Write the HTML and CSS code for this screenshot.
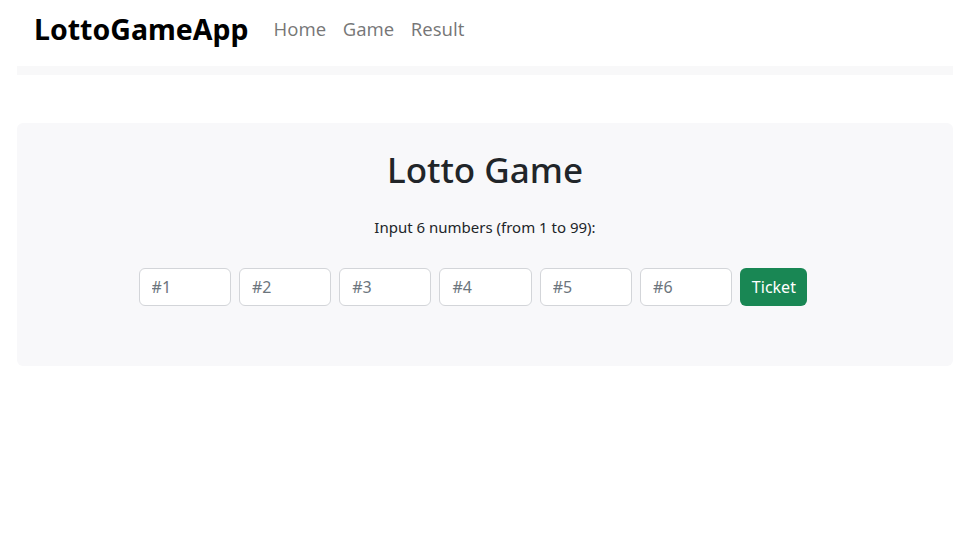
FILE: index.html
```html
<!DOCTYPE html>
<html lang="en">
<head>
<meta charset="utf-8">
<title>LottoGameApp</title>
<link rel="stylesheet" href="styles.css">
</head>
<body>
<header class="navbar">
  <a class="brand" href="#">LottoGameApp</a>
  <nav class="nav">
    <a href="#">Home</a>
    <a href="#">Game</a>
    <a href="#">Result</a>
  </nav>
</header>
<div class="strip"></div>
<main class="main">
  <section class="card">
    <h1 class="title">Lotto Game</h1>
    <p class="hint">Input 6 numbers (from 1 to 99):</p>
    <form class="row">
      <input class="num" type="text" placeholder="#1">
      <input class="num" type="text" placeholder="#2">
      <input class="num" type="text" placeholder="#3">
      <input class="num" type="text" placeholder="#4">
      <input class="num" type="text" placeholder="#5">
      <input class="num" type="text" placeholder="#6">
      <button class="btn" type="button">Ticket</button>
    </form>
  </section>
</main>
</body>
</html>
```
FILE: styles.css
```css
* { box-sizing: border-box; }
body {
  margin: 0;
  font-family: "Noto Sans", "Open Sans", sans-serif;
  color: #212529;
  background: #fff;
}
.navbar {
  display: flex;
  align-items: center;
  height: 57px;
  padding-left: 34px;
}
.brand {
  font-size: 28.5px;
  font-weight: 700;
  color: #000;
  text-decoration: none;
  margin-right: 25px;
}
.nav { display: flex; gap: 16.5px; }
.nav a {
  font-size: 18.5px;
  color: rgba(0,0,0,.55);
  text-decoration: none;
}
.strip {
  margin: 9px 19px 0 17px;
  height: 9px;
  background: #f8f8f9;
}
.main {
  padding: 48px 19px 0 17px;
}
.card {
  background: #f8f8fa;
  border-radius: 6px;
  height: 243px;
  padding-top: 26px;
  text-align: center;
}
.title {
  margin: 0;
  font-size: 35px;
  font-weight: 500;
  line-height: 1.2;
}
.hint {
  margin: 26px 0 0;
  font-size: 15px;
}
.row {
  margin-top: 31px;
  display: flex;
  justify-content: center;
  gap: 8px;
  padding-right: 24px;
}
.num {
  width: 92.3px;
  height: 38px;
  border: 1px solid #d3d5d9;
  border-radius: 6px;
  padding: 0 12px;
  font: inherit;
  font-size: 16px;
  background: #fff;
}
.num::placeholder { color: #6c757d; }
.btn {
  height: 38px;
  padding: 0 11.5px;
  border: none;
  border-radius: 6px;
  background: #198754;
  color: #fff;
  font: inherit;
  font-size: 16px;
}
```
